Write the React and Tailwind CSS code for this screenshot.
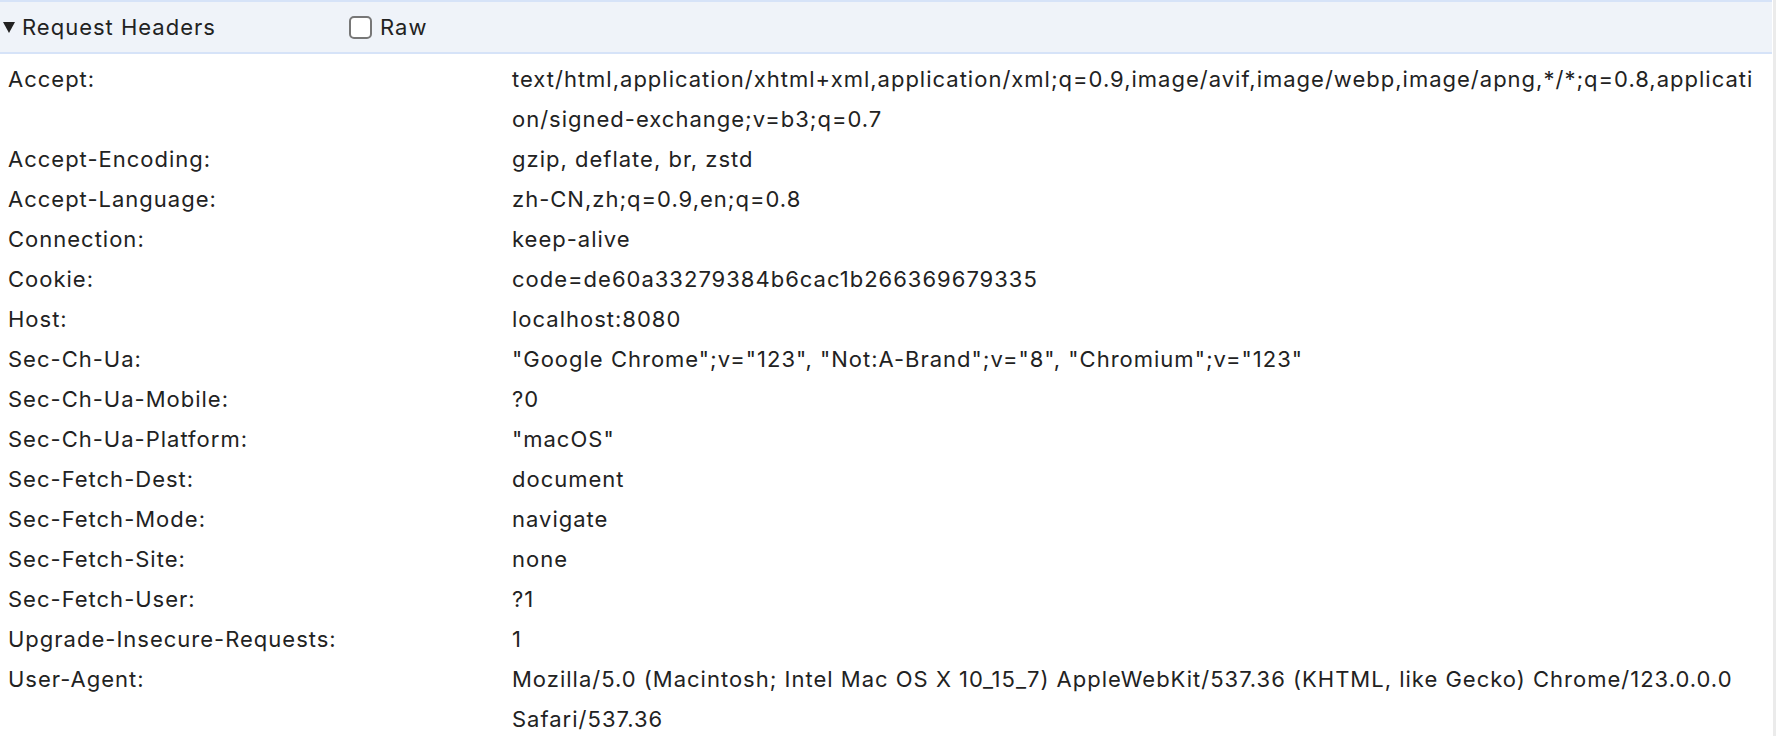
import React, { useState } from 'react';

const headers = [
  ['Accept', 'text/html,application/xhtml+xml,application/xml;q=0.9,image/avif,image/webp,image/apng,*/*;q=0.8,application/signed-exchange;v=b3;q=0.7'],
  ['Accept-Encoding', 'gzip, deflate, br, zstd'],
  ['Accept-Language', 'zh-CN,zh;q=0.9,en;q=0.8'],
  ['Connection', 'keep-alive'],
  ['Cookie', 'code=de60a33279384b6cac1b266369679335'],
  ['Host', 'localhost:8080'],
  ['Sec-Ch-Ua', '"Google Chrome";v="123", "Not:A-Brand";v="8", "Chromium";v="123"'],
  ['Sec-Ch-Ua-Mobile', '?0'],
  ['Sec-Ch-Ua-Platform', '"macOS"'],
  ['Sec-Fetch-Dest', 'document'],
  ['Sec-Fetch-Mode', 'navigate'],
  ['Sec-Fetch-Site', 'none'],
  ['Sec-Fetch-User', '?1'],
  ['Upgrade-Insecure-Requests', '1'],
  ['User-Agent', 'Mozilla/5.0 (Macintosh; Intel Mac OS X 10_15_7) AppleWebKit/537.36 (KHTML, like Gecko) Chrome/123.0.0.0 Safari/537.36'],
];

export default function App() {
  const [raw, setRaw] = useState(false);
  const [open, setOpen] = useState(true);

  return (
    <div className="flex h-[736px] overflow-hidden bg-white text-[22px] tracking-[1px] text-[#222] font-['Inter','Liberation_Sans',sans-serif]">
      <div className="flex-1 mr-px">
        {/* section header */}
        <div className="flex items-center h-[54px] pt-px border-t-2 border-b-2 border-[#d6e3f8] bg-[#eff3f9]">
          <button
            type="button"
            onClick={() => setOpen(!open)}
            className="flex items-center w-[306px] pl-[3px] text-left"
          >
            <svg className="w-[12px] h-[11px] mr-[7px]" viewBox="0 0 12 11">
              <path d="M0 0h12L6 11z" fill="#222" />
            </svg>
            Request Headers
          </button>
          <label className="flex items-center ml-[43px] cursor-pointer select-none">
            <input
              type="checkbox"
              checked={raw}
              onChange={(e) => setRaw(e.target.checked)}
              className="appearance-none w-[23px] h-[23px] rounded-[5px] border-2 border-[#777] bg-white mr-[8px]"
            />
            Raw
          </label>
        </div>

        {/* header rows */}
        {open && (
          <div className="pt-[5px]">
            {headers.map(([name, value]) => (
              <div key={name} className="flex leading-[40px]">
                <div className="w-[512px] shrink-0 pl-[8px]">{name}:</div>
                <div className="w-[1242px] break-words">{value}</div>
              </div>
            ))}
          </div>
        )}
      </div>
      <div className="w-[3px] bg-[#ebebeb]" />
    </div>
  );
}
